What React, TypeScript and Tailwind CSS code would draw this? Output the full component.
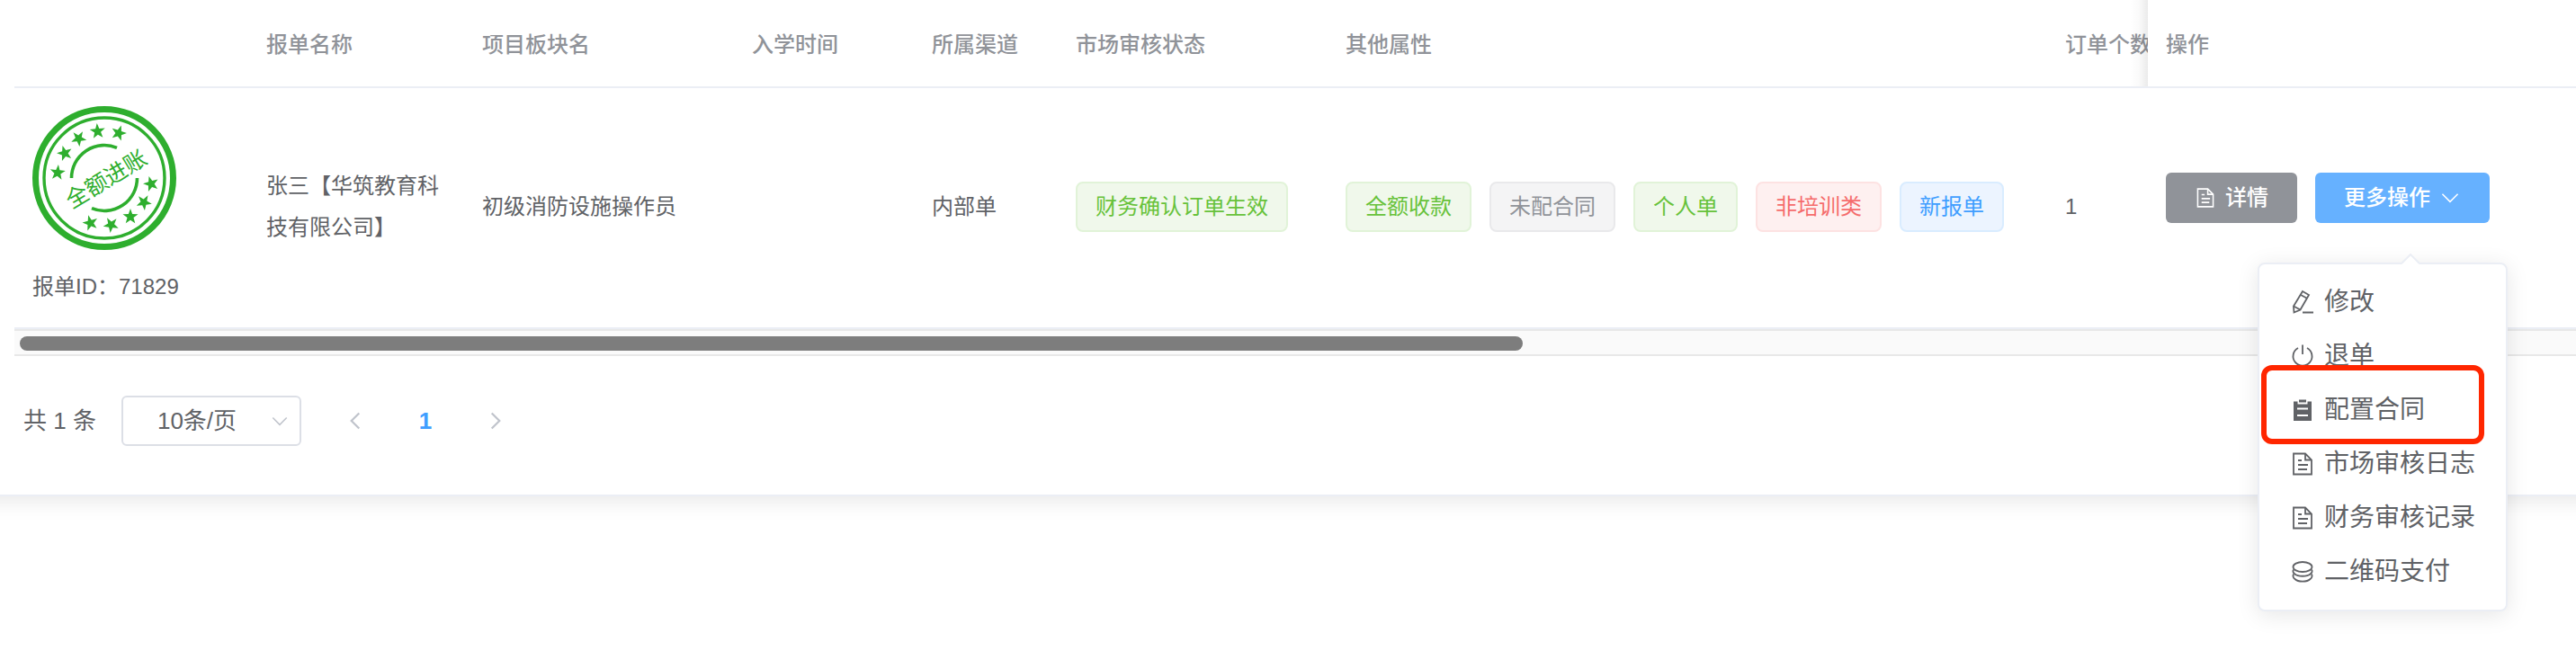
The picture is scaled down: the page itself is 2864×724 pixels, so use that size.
import type { ReactNode } from "react";

type TagTone = "success" | "info" | "danger" | "primary";

const tagTones: Record<TagTone, string> = {
  success: "border-[#e1f3d8] bg-[#f0f8eb] text-[#67c23a]",
  info: "border-[#e9e9eb] bg-[#f4f4f5] text-[#909399]",
  danger: "border-[#fde2e2] bg-[#fef0f0] text-[#f56c6c]",
  primary: "border-[#d9ecff] bg-[#ecf4ff] text-[#409eff]",
};

const columns = [
  { label: "", width: "w-[260px]" },
  { label: "报单名称", width: "w-60" },
  { label: "项目板块名", width: "w-[300px]" },
  { label: "入学时间", width: "w-50" },
  { label: "所属渠道", width: "w-40" },
  { label: "市场审核状态", width: "w-[300px]" },
  { label: "其他属性", width: "w-[800px]" },
  { label: "订单个数", width: "w-28" },
];

const attributes: { label: string; tone: TagTone }[] = [
  { label: "全额收款", tone: "success" },
  { label: "未配合同", tone: "info" },
  { label: "个人单", tone: "success" },
  { label: "非培训类", tone: "danger" },
  { label: "新报单", tone: "primary" },
];

const stars = [
  { x: 28, y: 74, turn: 6 },
  { x: 36, y: 52.5, turn: -16 },
  { x: 51.5, y: 36, turn: 30 },
  { x: 72.5, y: 28, turn: -5 },
  { x: 96, y: 30, turn: 18 },
  { x: 132, y: 86.5, turn: -16 },
  { x: 124, y: 107, turn: 30 },
  { x: 109, y: 123, turn: 0 },
  { x: 87.5, y: 132, turn: -30 },
  { x: 64.5, y: 130, turn: -15 },
];

function Icon({ className, children }: { className: string; children: ReactNode }) {
  return (
    <svg
      viewBox="0 0 28 28"
      fill="none"
      stroke="currentColor"
      strokeWidth="1.8"
      className={`shrink-0 ${className}`}
      aria-hidden="true"
    >
      {children}
    </svg>
  );
}

const documentIcon = (
  <>
    <path d="M4 2.5H17L24 9.5V25.5H4Z" />
    <path d="M17 2.5V9.5H24M9 10H13M9 15H20M9 20H19" />
  </>
);

const menuItems = [
  {
    label: "修改",
    icon: (
      <>
        <path d="M14 2L21 6L11.5 22.5L4.5 25.5L4 18.5Z" />
        <path d="M12 6L18.5 9.5M4 18.5L11.5 22.5M14 25.5H26" />
      </>
    ),
  },
  {
    label: "退单",
    icon: (
      <>
        <path d="M9 5A10.5 10.5 0 1 0 19 5" />
        <path d="M14 1.5V12" />
      </>
    ),
  },
  {
    label: "配置合同",
    marked: true,
    icon: (
      <>
        <path d="M4 4.5H8.5V7.5H19.5V4.5H24V26H4Z" fill="currentColor" stroke="none" />
        <path d="M10 2.5H18V5.5H10Z" fill="currentColor" stroke="none" />
        <path d="M8 12.5H20M8 20H20" stroke="#fff" />
      </>
    ),
  },
  { label: "市场审核日志", icon: documentIcon },
  { label: "财务审核记录", icon: documentIcon },
  {
    label: "二维码支付",
    icon: (
      <>
        <ellipse cx="14" cy="8.5" rx="10.5" ry="5.5" />
        <path d="M4 11.5C3 13 3.5 15 5.5 16.5C9 19.5 19 19.5 22.5 16.5C24.5 15 25 13 24 11.5" />
        <path d="M4 16.5C3 18.5 3.5 20.5 5.5 22C9 25.5 19 25.5 22.5 22C24.5 20.5 25 18.5 24 16.5" />
      </>
    ),
  },
];

function Tag({ tone, children }: { tone: TagTone; children: ReactNode }) {
  return (
    <span className={`inline-flex h-14 items-center rounded-lg border-2 px-5 ${tagTones[tone]}`}>
      {children}
    </span>
  );
}

function Stamp() {
  return (
    <svg viewBox="0 0 160 160" className="size-40" fill="none" stroke="#2eae2e">
      <circle cx="80" cy="80" r="76.5" strokeWidth="7" />
      <circle cx="80" cy="80" r="67" strokeWidth="3.4" />
      <path d="M43.5 80A36.5 36.5 0 0 1 94 46.3" strokeWidth="3.6" />
      <path d="M116.5 80A36.5 36.5 0 0 1 66 113.7" strokeWidth="3.6" />
      {stars.map((star) => (
        <path
          key={`${star.x}-${star.y}`}
          d="M0-8L1.9-2.6L7.6-2.5L3.1 1L4.7 6.5L0 3.3L-4.7 6.5L-3.1 1L-7.6-2.5L-1.9-2.6Z"
          transform={`translate(${star.x} ${star.y}) rotate(${star.turn}) scale(1.12)`}
          fill="#2eae2e"
          stroke="none"
        />
      ))}
      <text
        x="82"
        y="90"
        transform="rotate(-31 82 81)"
        textAnchor="middle"
        fontSize="25"
        fill="#2eae2e"
        stroke="none"
      >
        全额进账
      </text>
    </svg>
  );
}

function MoreMenu() {
  return (
    <div className="absolute top-25 -right-5 z-20 rounded-lg border-2 border-[#ebeef5] bg-white py-3 shadow-[0_4px_24px_rgba(0,0,0,0.1)]">
      <svg viewBox="0 0 24 12" className="absolute -top-3 right-[94px] h-3 w-6">
        <path d="M2 12L12 2L22 12Z" fill="#fff" />
        <path d="M2 11L12 1L22 11" fill="none" stroke="#ebeef5" strokeWidth="2" />
      </svg>
      <ul>
        {menuItems.map((item) => (
          <li key={item.label} className="relative">
            <button
              type="button"
              className="flex h-15 w-full items-center gap-2.5 px-[34px] text-[28px] whitespace-nowrap text-[#606266]"
            >
              <Icon className="size-7">{item.icon}</Icon>
              {item.label}
            </button>
            {item.marked && (
              <span className="pointer-events-none absolute -top-5 right-6 -bottom-2 left-0.5 z-10 rounded-xl border-6 border-[#ff2600]" />
            )}
          </li>
        ))}
      </ul>
    </div>
  );
}

function OrderTable() {
  return (
    <table className="w-full table-fixed border-separate border-spacing-0 text-left text-2xl text-[#606266] [&_td]:border-b-2 [&_td]:border-[#ebeef5] [&_th]:border-b-2 [&_th]:border-[#ebeef5]">
      <thead>
        <tr className="h-[98px] text-[#909399]">
          {columns.map((column) => (
            <th
              key={column.label}
              className={`overflow-hidden pt-1 pl-5 font-medium whitespace-nowrap ${column.width}`}
            >
              {column.label}
            </th>
          ))}
          <th className="relative pt-1 pl-5 font-medium">
            <span className="absolute inset-y-0 -left-5 w-5 bg-linear-to-l from-black/8 via-black/2 to-transparent" />
            操作
          </th>
        </tr>
      </thead>
      <tbody>
        <tr>
          <td className="px-5 pt-5 pb-[22px]">
            <Stamp />
            <p className="mt-[18px] leading-[46px]">报单ID：71829</p>
          </td>
          <td className="px-5 pb-0.5 leading-[46px]">张三【华筑教育科技有限公司】</td>
          <td className="px-5 pb-0.5">初级消防设施操作员</td>
          <td className="px-5 pb-0.5" />
          <td className="px-5 pb-0.5">内部单</td>
          <td className="px-5 pb-0.5">
            <Tag tone="success">财务确认订单生效</Tag>
          </td>
          <td className="px-5 pb-0.5">
            <div className="flex gap-5">
              {attributes.map((attribute) => (
                <Tag key={attribute.label} tone={attribute.tone}>
                  {attribute.label}
                </Tag>
              ))}
            </div>
          </td>
          <td className="px-5 pb-0.5">1</td>
          <td className="px-5 pb-[22px]">
            <div className="flex gap-5 font-medium text-white">
              <button type="button" className="flex h-14 items-center gap-2.5 rounded-md bg-[#909399] px-8">
                <Icon className="size-6">{documentIcon}</Icon>
                详情
              </button>
              <div className="relative">
                <button type="button" className="flex h-14 items-center gap-2.5 rounded-md bg-[#66b1ff] px-8">
                  更多操作
                  <Icon className="size-6">
                    <path d="M4 9L14 19L24 9" />
                  </Icon>
                </button>
                <div className="font-normal">
                  <MoreMenu />
                </div>
              </div>
            </div>
          </td>
        </tr>
      </tbody>
    </table>
  );
}

function Pagination() {
  return (
    <nav className="flex items-center pt-11 pl-2.5 text-[26px] text-[#606266]">
      <span>共 1 条</span>
      <label className="relative ml-7">
        <select
          aria-label="每页条数"
          className="block h-14 w-50 appearance-none rounded-md border-2 border-[#dcdfe6] bg-white pl-[38px]"
        >
          <option>10条/页</option>
        </select>
        <Icon className="pointer-events-none absolute top-4 right-3 size-6 text-[#c0c4cc]">
          <path d="M5 10L14 19L23 10" />
        </Icon>
      </label>
      <button type="button" aria-label="上一页" className="ml-12 text-[#c0c4cc]">
        <Icon className="size-6">
          <path d="M19 4L9 14L19 24" strokeWidth="2.6" />
        </Icon>
      </button>
      <button type="button" className="mx-8 w-17 font-bold text-[#409eff]">
        1
      </button>
      <button type="button" aria-label="下一页" className="text-[#c0c4cc]">
        <Icon className="size-6">
          <path d="M9 4L19 14L9 24" strokeWidth="2.6" />
        </Icon>
      </button>
    </nav>
  );
}

export default function App() {
  return (
    <div
      lang="zh-CN"
      className="min-h-screen overflow-hidden bg-white font-['Liberation_Sans','Noto_Sans_CJK_SC',sans-serif]"
    >
      <main className="-mx-8 border-b-2 border-[#ebeef5] pr-8 pb-[54px] pl-12 shadow-[0_4px_24px_rgba(0,0,0,0.1)]">
        <OrderTable />
        <div className="border-y-2 border-[#e8e8e8] bg-[#fafafa] pt-1.5 pb-1 pl-1.5">
          <div className="h-4 w-[58.8%] rounded-full bg-[#7d7d7d]" />
        </div>
        <Pagination />
      </main>
    </div>
  );
}
